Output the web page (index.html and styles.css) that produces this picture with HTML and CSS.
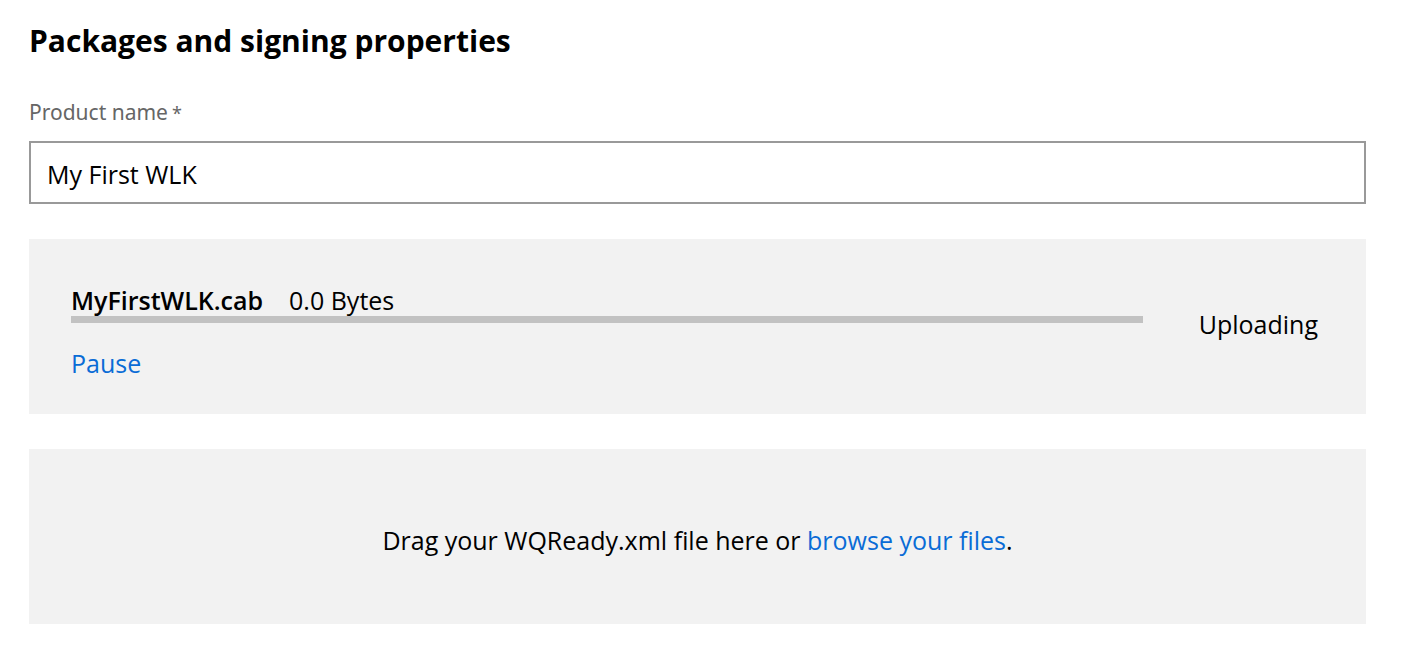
FILE: index.html
```
<!DOCTYPE html>
<html lang="en">
<head>
<meta charset="utf-8">
<title>Packages and signing properties</title>
<link rel="stylesheet" href="styles.css">
</head>
<body>
<main class="page">
  <h1 class="title">Packages and signing properties</h1>
  <label class="label" for="product">Product name<span class="required">*</span></label>
  <input class="input" id="product" type="text" value="My First WLK" required>
  <section class="panel upload">
    <div class="transfer">
      <div class="file"><strong class="file-name">MyFirstWLK.cab</strong><span>0.0 Bytes</span></div>
      <div class="track" role="progressbar" aria-label="Upload progress" aria-valuenow="0" aria-valuemin="0" aria-valuemax="100"></div>
      <button class="link pause" type="button">Pause</button>
    </div>
    <div class="status">Uploading</div>
  </section>
  <section class="panel drop">
    <p class="hint">Drag your WQReady.xml file here or <a class="link" href="#">browse your files</a>.</p>
  </section>
</main>
</body>
</html>
```

FILE: styles.css
```
* {
  box-sizing: border-box;
}

body {
  margin: 0;
  background: #fff;
  color: #000;
  font-family: "Segoe UI", "Open Sans", "Noto Sans", sans-serif;
  font-size: 25px;
  line-height: 32px;
}

.page {
  display: flex;
  flex-direction: column;
  padding: 21px 44px 35px 29px;
}

.title {
  margin: 0 0 36px;
  font-size: 30px;
  font-weight: 700;
  line-height: 40px;
}

.label {
  margin-bottom: 12px;
  color: #666;
  font-family: "Segoe UI", "Noto Sans", sans-serif;
  font-size: 21px;
  line-height: 31px;
}

.required {
  margin-left: 4px;
  font-size: 18px;
}

.input {
  width: 100%;
  height: 63px;
  padding: 2px 16px 0;
  border: 2px solid #999;
  border-radius: 0;
  background: #fff;
  color: #000;
  font: inherit;
}

.panel {
  display: flex;
  min-height: 175px;
  margin-top: 35px;
  background: #f2f2f2;
}

.upload {
  gap: 56px;
  padding: 45px 48px 32px 42px;
}

.transfer {
  flex: 1;
}

.file {
  display: flex;
  gap: 26px;
}

.file-name {
  font-weight: 600;
}

.track {
  height: 7px;
  background: #c2c2c2;
}

.link {
  padding: 0;
  border: 0;
  background: none;
  color: #0a6cd6;
  font: inherit;
  text-decoration: none;
  cursor: pointer;
}

.pause {
  display: block;
  margin-top: 24px;
}

.status {
  padding-top: 24px;
}

.drop {
  align-items: center;
  justify-content: center;
}

.hint {
  margin: 0;
  padding-top: 6px;
}
```
